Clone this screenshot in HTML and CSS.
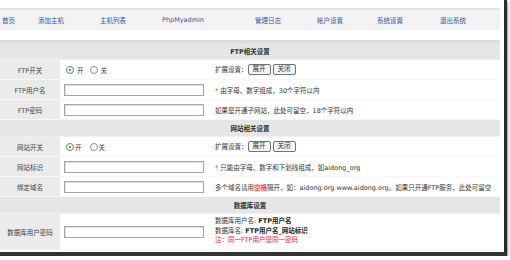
FILE: index.html
```html
<!DOCTYPE html>
<html lang="zh">
<head>
<meta charset="utf-8">
<link rel="stylesheet" href="styles.css">
</head>
<body>
<div class="frame">
  <div class="inner">
    <nav class="nav">
      <a class="nav-item w36">首页</a>
      <a class="nav-item w62">添加主机</a>
      <a class="nav-item w62">主机列表</a>
      <a class="nav-item w93">PhpMyadmin</a>
      <a class="nav-item w62">管理日志</a>
      <a class="nav-item w60">帐户设置</a>
      <a class="nav-item w63">系统设置</a>
      <a class="nav-item w60">退出系统</a>
    </nav>

    <table class="form">
      <colgroup><col class="c-label"><col class="c-input"><col></colgroup>
      <tr class="sec first"><td colspan="3">FTP相关设置</td></tr>
      <tr>
        <td class="lbl">FTP开关</td>
        <td class="val"><span class="radio on"></span><span class="rt">开</span><span class="radio"></span><span class="rt">关</span></td>
        <td class="tip">扩展设置：<span class="btn">展开</span><span class="btn">关闭</span></td>
      </tr>
      <tr>
        <td class="lbl">FTP用户名</td>
        <td class="val"><span class="inp"></span></td>
        <td class="tip"><span class="red">*</span> 由字母、数字组成，30个字符以内</td>
      </tr>
      <tr>
        <td class="lbl">FTP密码</td>
        <td class="val"><span class="inp"></span></td>
        <td class="tip">如果是开通子网站，此处可留空，18个字符以内</td>
      </tr>
      <tr class="sec"><td colspan="3">网站相关设置</td></tr>
      <tr>
        <td class="lbl">网站开关</td>
        <td class="val tight"><span class="radio on"></span><span class="rt">开</span><span class="radio"></span><span class="rt">关</span></td>
        <td class="tip">扩展设置：<span class="btn">展开</span><span class="btn">关闭</span></td>
      </tr>
      <tr>
        <td class="lbl">网站标识</td>
        <td class="val"><span class="inp"></span></td>
        <td class="tip"><span class="red">*</span> 只能由字母、数字和下划线组成，如aidong_org</td>
      </tr>
      <tr>
        <td class="lbl">绑定域名</td>
        <td class="val"><span class="inp"></span></td>
        <td class="tip">多个域名请用<span class="hl">空格</span>隔开，如：aidong.org www.aidong.org。如果只开通FTP服务，此处可留空</td>
      </tr>
      <tr class="sec"><td colspan="3">数据库设置</td></tr>
      <tr class="db">
        <td class="lbl">数据库用户密码</td>
        <td class="val"><span class="inp"></span></td>
        <td class="tip lines">
          <div>数据库用户名: <b>FTP用户名</b></div>
          <div>数据库名: <b>FTP用户名_网站标识</b></div>
          <div class="red">注：同一FTP用户是同一密码</div>
        </td>
      </tr>
    </table>
  </div>
</div>
</body>
</html>
```

FILE: styles.css
```css
html, body {
  margin: 0;
  padding: 0;
  background: #ffffff;
}
body {
  font-family: "DejaVu Sans", "Noto Sans CJK SC", sans-serif;
  font-size: 6.5px;
  color: #3a3a3a;
}
.frame {
  width: 504px;
  height: 252px;
  border-right: 3px solid #2b2b2b;
  border-bottom: 4px solid #333333;
  box-shadow: 1px 2px 2px rgba(0,0,0,0.45);
  box-sizing: content-box;
}
.inner {
  width: 500px;
  padding-top: 8px;
}
.nav {
  display: flex;
  height: 20px;
  border-top: 2px solid #e2e2e2;
  background: #f3f3f5;
  align-items: center;
}
.nav-item {
  color: #3355a0;
  padding-left: 2px;
  box-sizing: border-box;
  white-space: nowrap;
}
.w36 { width: 36px; }
.w62 { width: 62px; }
.w93 { width: 93px; }
.w60 { width: 60px; }
.w63 { width: 63px; }

.form {
  width: 500px;
  margin-top: 10px;
  border-collapse: collapse;
  table-layout: fixed;
}
.c-label { width: 60px; }
.c-input { width: 150px; }
.form td {
  padding: 0;
  height: 19px;
  border-bottom: 1px solid #f6f6f6;
  white-space: nowrap;
  overflow: hidden;
}
.sec td {
  background: #e6e6e6;
  text-align: center;
  font-weight: bold;
  color: #2e2e2e;
  height: 16px;
  border-bottom: 1px solid #f0f0f0;
}
.sec.first td {
  border-top: 3px solid #dcdcdc;
}
.lbl {
  background: #ebebeb;
  text-align: center;
  color: #444;
}
.form .lbl {
  border-bottom: 1px solid #f7f7f7;
}
.val {
  padding-left: 4px !important;
}
.val.tight .rt { margin-right: 6px; margin-left: 0; }
.radio {
  display: inline-block;
  width: 6px;
  height: 6px;
  border: 1px solid #8a8a8a;
  border-radius: 50%;
  vertical-align: middle;
  position: relative;
  background: #fff;
  margin-left: 2px;
}
.radio.on {
  border-color: #4c8a58;
}
.radio.on::after {
  content: "";
  position: absolute;
  left: 2px;
  top: 2px;
  width: 2px;
  height: 2px;
  border-radius: 50%;
  background: #2f6e3a;
}
.rt {
  margin-left: 3px;
  margin-right: 4px;
  vertical-align: middle;
}
.val.tight .radio + .rt { margin-left: 1px; }
.inp {
  display: block;
  width: 138px;
  height: 10px;
  border: 1px solid #a4a4ac;
  box-shadow: inset 1px 1px 0 #e0e0e0;
  background: #fff;
}
.tip {
  padding-left: 5px !important;
  color: #333;
}
.btn {
  display: inline-block;
  padding: 1px 4px;
  border: 1px solid #6c7280;
  border-radius: 2px;
  background: #f6f6f6;
  margin-right: 2px;
  line-height: 7px;
  color: #333;
  vertical-align: middle;
}
.red { color: #e0242c; }
.hl { color: #e0242c; background: #ffd9d9; }
.db td { height: 35px; }
.lines div { line-height: 9.5px; }
.lines b { color: #222; }
```
